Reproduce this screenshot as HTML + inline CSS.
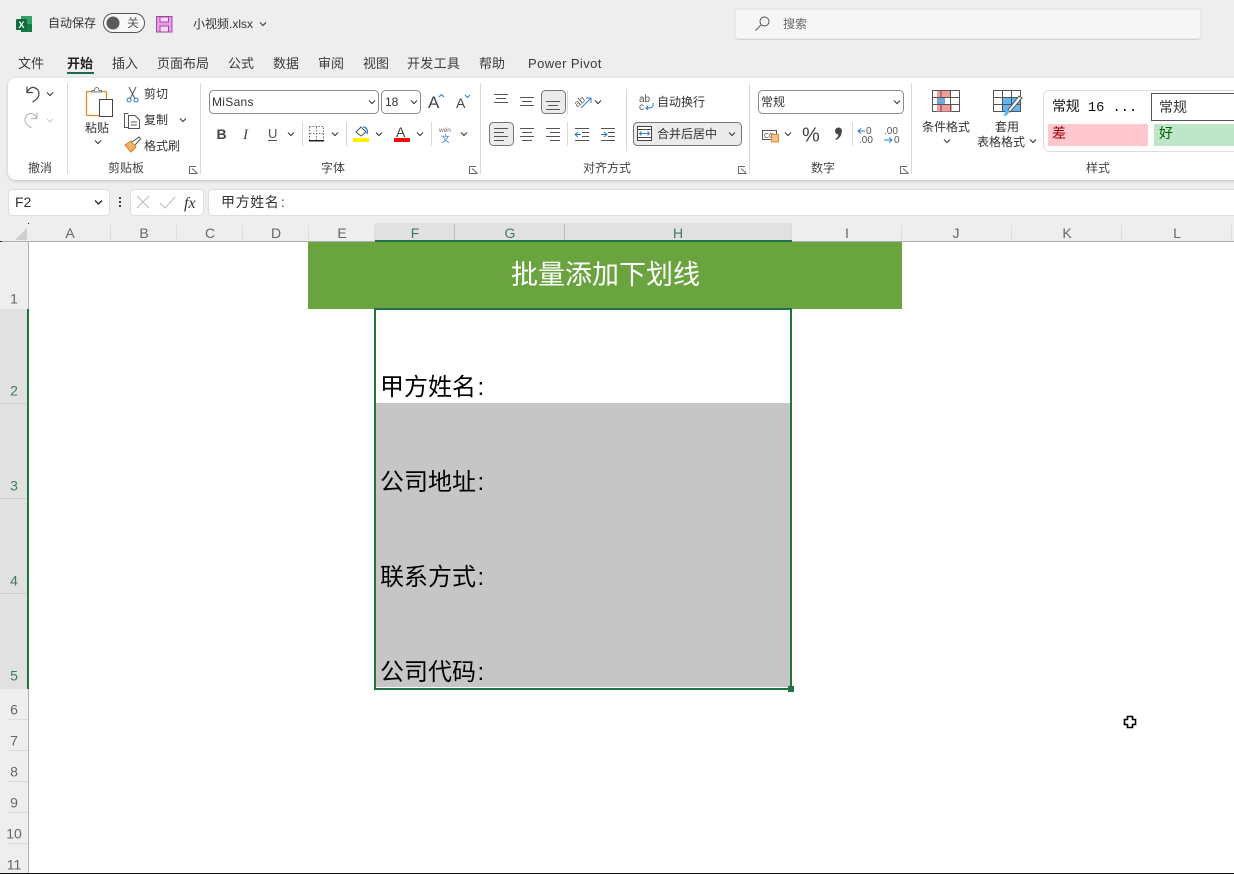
<!DOCTYPE html>
<html lang="zh">
<head>
<meta charset="utf-8">
<title>小视频.xlsx - Excel</title>
<style>
html,body{margin:0;padding:0;width:1234px;height:874px;overflow:hidden;background:#eeeeee}
svg{display:block;position:absolute;left:0;top:0}
text{font-family:"Liberation Sans","Noto Sans CJK SC",sans-serif;fill:#333}
.r{font-size:12px}
.tab{font-size:13px;fill:#3a3a3a}
.g{font-size:12px;fill:#444}
.h{font-size:14px;fill:#666;text-anchor:middle}
.hs{font-size:14px;fill:#3f7a5e;text-anchor:middle}
.c{font-size:24px;fill:#000}
.l{fill:none;stroke:#555;stroke-width:1}
.ch{fill:none;stroke:#444;stroke-width:1.2}
.sep{stroke:#d9d9d9;stroke-width:1}
</style>
</head>
<body>
<svg width="1234" height="874" viewBox="0 0 1234 874" xmlns="http://www.w3.org/2000/svg">
<defs>
<filter id="sh" x="-2%" y="-10%" width="104%" height="125%"><feDropShadow dx="0" dy="1" stdDeviation="1.500" flood-color="#000" flood-opacity=".2"/></filter>
<path id="cv" d="M-3 -1.500L0 1.500L3 -1.500" class="ch"/>
</defs>

<!-- title bar -->
<rect x="21" y="16" width="11" height="16" fill="#33a06a"/>
<rect x="21" y="24" width="11" height="8" fill="#107c41"/>
<rect x="16" y="19" width="11" height="11" rx="1" fill="#0f6b3c"/>
<text x="18.500" y="28" style="font-size:9px;font-weight:bold;fill:#fff">X</text>
<text x="48" y="27" class="r">自动保存</text>
<rect x="103.500" y="13.500" width="41" height="19" rx="9.500" fill="#f8f8f8" stroke="#555"/>
<circle cx="113" cy="23" r="6.500" fill="#5a5a5a"/>
<text x="127" y="27" class="r" style="fill:#555">关</text>
<path d="M156.500 16.500H172V32H156.500Z" fill="#e3a3e3" stroke="#a744a8"/>
<rect x="160" y="17" width="8.500" height="5" fill="#f3dcf3" stroke="#a744a8"/>
<rect x="160" y="26" width="8.500" height="6" fill="#f3dcf3" stroke="#a744a8"/>
<text x="193" y="28" style="font-size:12px">小视频.xlsx</text>
<use href="#cv" x="263" y="24"/>

<rect x="735" y="9" width="466" height="30" rx="4" fill="#f6f6f6" stroke="#dedede"/>
<rect x="737" y="39" width="462" height="1" fill="#d2d2d2"/>
<circle cx="764.500" cy="21.500" r="4.500" fill="none" stroke="#555"/>
<path d="M761 25L755.500 30.500" stroke="#555" fill="none"/>
<text x="783" y="28" class="r" style="fill:#666">搜索</text>

<!-- tabs -->
<text x="18" y="68" class="tab">文件</text>
<text x="67" y="68" class="tab" style="font-weight:bold;fill:#222">开始</text>
<rect x="67" y="72" width="27" height="2" fill="#1f6b4c"/>
<text x="112" y="68" class="tab">插入</text>
<text x="157" y="68" class="tab">页面布局</text>
<text x="228" y="68" class="tab">公式</text>
<text x="273" y="68" class="tab">数据</text>
<text x="318" y="68" class="tab">审阅</text>
<text x="363" y="68" class="tab">视图</text>
<text x="407" y="68" class="tab" style="letter-spacing:.3px">开发工具</text>
<text x="479" y="68" class="tab">帮助</text>
<text x="528" y="68" class="tab" style="letter-spacing:.4px">Power Pivot</text>

<!-- ribbon -->
<rect x="8" y="78" width="1240" height="102" rx="8" fill="#fff" filter="url(#sh)"/>
<g class="sep">
<line x1="67.500" y1="83" x2="67.500" y2="174"/><line x1="200.500" y1="83" x2="200.500" y2="174"/>
<line x1="480.500" y1="83" x2="480.500" y2="174"/><line x1="749.500" y1="83" x2="749.500" y2="174"/>
<line x1="911.500" y1="83" x2="911.500" y2="174"/>
<line x1="302.500" y1="122" x2="302.500" y2="146"/><line x1="346.500" y1="122" x2="346.500" y2="146"/><line x1="431.500" y1="122" x2="431.500" y2="146"/>
<line x1="567.500" y1="90" x2="567.500" y2="114"/><line x1="567.500" y1="122" x2="567.500" y2="146"/><line x1="626.500" y1="89" x2="626.500" y2="151"/>
<line x1="852.500" y1="122" x2="852.500" y2="146"/>
</g>
<text x="28" y="172" class="g">撤消</text>
<text x="108" y="172" class="g">剪贴板</text>
<text x="321" y="172" class="g">字体</text>
<text x="583" y="172" class="g">对齐方式</text>
<text x="811" y="172" class="g">数字</text>
<text x="1086" y="172" class="g">样式</text>
<g fill="none" stroke="#666" stroke-width="1">
<path d="M189.500 166.500V173.500H197.500M189.500 166.500H196M192 168.500L197 173"/>
<path d="M469.500 166.500V173.500H477.500M469.500 166.500H476M472 168.500L477 173"/>
<path d="M738.500 166.500V173.500H746.500M738.500 166.500H745M741 168.500L746 173"/>
<path d="M900.500 166.500V173.500H908.500M900.500 166.500H907M903 168.500L908 173"/>
</g>

<!-- undo / redo -->
<path d="M27 86.500V92.500H33M27 92.500C29 88 32 87 34 87.500C37.500 88.500 39 91 39 94C39 97.500 36 100 32.500 102" fill="none" stroke="#444" stroke-width="1.200"/>
<use href="#cv" x="50" y="94"/>
<path d="M37 112.500V118.500H31M37 118.500C35 114 32 113 30 113.500C26.500 114.500 25 117 25 120C25 123.500 28 126 31.500 128" fill="none" stroke="#bbb" stroke-width="1.200"/>
<path d="M47 119L50 122L53 119" fill="none" stroke="#ccc"/>

<!-- clipboard -->
<rect x="86.500" y="91.500" width="20" height="24" rx="1" fill="#fff" stroke="#e08a2e" stroke-width="1.300"/>
<path d="M92 92V90.500H94.500C94.500 86.500 99 86.500 99 90.500H101.500V92Z" fill="#fff" stroke="#777"/>
<rect x="99.500" y="99.500" width="13" height="17" fill="#fff" stroke="#444"/>
<text x="85" y="132" class="r">粘贴</text>
<use href="#cv" x="98" y="142"/>
<path d="M129 87L135 99M136 87L130 99" stroke="#555" fill="none"/>
<circle cx="129" cy="100" r="2" fill="none" stroke="#2b7cd3"/><circle cx="136" cy="100" r="2" fill="none" stroke="#2b7cd3"/>
<text x="144" y="98" class="r">剪切</text>
<path d="M128.500 113.500H124.500V127.500H128.500" class="l"/>
<path d="M128.500 115.500H135L139.500 120V128.500H128.500Z" class="l"/>
<path d="M131 122H137M131 125H137" class="l"/>
<text x="144" y="124" class="r">复制</text>
<use href="#cv" x="183" y="120"/>
<path d="M125 145L131 141L136 147L131 152Z" fill="#f0b070" stroke="#d97a1e"/>
<path d="M132 142L139 137L140.500 139L135 145" fill="#fff" stroke="#555"/>
<text x="144" y="150" class="r">格式刷</text>

<!-- font -->
<rect x="209.500" y="90.500" width="169" height="23" rx="4" fill="#fff" stroke="#8a8a8a"/>
<text x="212" y="106" class="r" style="letter-spacing:.3px">MiSans</text>
<use href="#cv" x="372" y="102"/>
<rect x="381.500" y="90.500" width="39" height="23" rx="4" fill="#fff" stroke="#8a8a8a"/>
<text x="385" y="106" class="r">18</text>
<use href="#cv" x="414" y="102"/>
<text x="428" y="108" style="font-size:17px;fill:#444">A</text>
<path d="M439 97L441.500 94.500L444 97" fill="none" stroke="#2b7cd3"/>
<text x="456" y="108" style="font-size:14px;fill:#444">A</text>
<path d="M465 95L467.500 97.500L470 95" fill="none" stroke="#2b7cd3"/>
<text x="216.500" y="139" style="font-size:14px;font-weight:bold;fill:#444">B</text>
<text x="243" y="139" style="font-size:15px;font-style:italic;font-family:'Liberation Serif',serif;fill:#444">I</text>
<text x="268" y="138" style="font-size:13px;fill:#555">U</text>
<rect x="268" y="140" width="9" height="1" fill="#555"/>
<use href="#cv" x="291" y="134"/>
<rect x="309.500" y="126.500" width="14" height="14" fill="none" stroke="#666" stroke-dasharray="1.500 1.500"/>
<path d="M316.500 127V140M310 133.500H323" stroke="#777" stroke-dasharray="1.500 1.500"/>
<rect x="309" y="140" width="15" height="1.500" fill="#222"/>
<use href="#cv" x="335" y="134"/>
<path d="M356 132L361 127L366 132L361 136Z" fill="#fff" stroke="#555"/>
<path d="M363 127C367 127 368 131 367 134" fill="none" stroke="#2b7cd3" stroke-width="1.300"/>
<rect x="353" y="138" width="16" height="4" fill="#ffee00"/>
<use href="#cv" x="379" y="134"/>
<text x="396" y="137" style="font-size:14px;fill:#444">A</text>
<rect x="394" y="138" width="16" height="4" fill="#e81010"/>
<use href="#cv" x="420" y="134"/>
<text x="439" y="132" style="font-size:6.500px;fill:#666">wén</text>
<text x="441" y="142" style="font-size:9px;fill:#2b7cd3">文</text>
<use href="#cv" x="464" y="134"/>

<!-- alignment -->
<path d="M494 94.500H508M496 98.500H506M494 102.500H508" class="l"/>
<path d="M520 97.500H534M522 101.500H532M520 105.500H534" class="l"/>
<rect x="541.500" y="90.500" width="24" height="23" rx="4" fill="#ebebeb" stroke="#777"/>
<path d="M546 101.500H560M548 105.500H558M546 109.500H560" class="l"/>
<text x="573" y="104" transform="rotate(-40 580 100)" style="font-size:10px;fill:#666">ab</text>
<path d="M581 108L591 98M586 98H591V103" fill="none" stroke="#2b7cd3"/>
<use href="#cv" x="598" y="102"/>
<rect x="489.500" y="122.500" width="24" height="23" rx="4" fill="#ebebeb" stroke="#777"/>
<path d="M494 128.500H508M494 132.500H504M494 136.500H508M494 140.500H504" class="l"/>
<path d="M520 128.500H534M522 132.500H532M520 136.500H534M522 140.500H532" class="l"/>
<path d="M546 128.500H560M550 132.500H560M546 136.500H560M550 140.500H560" class="l"/>
<path d="M575 128.500H589M582 132.500H589M582 136.500H589M575 140.500H589" class="l"/>
<path d="M581 134.500H575M578 132L575 134.500L578 137" fill="none" stroke="#2b7cd3"/>
<path d="M601 128.500H615M608 132.500H615M608 136.500H615M601 140.500H615" class="l"/>
<path d="M601 134.500H607M604 132L607 134.500L604 137" fill="none" stroke="#2b7cd3"/>
<text x="639" y="102" style="font-size:10px;fill:#555">ab</text>
<text x="639" y="110" style="font-size:10px;fill:#555">c</text>
<path d="M653 103C654 108 651 108 646 108M648 106L646 108L648 110" fill="none" stroke="#2b7cd3"/>
<text x="657" y="106" class="r">自动换行</text>
<rect x="633.500" y="122.500" width="108" height="23" rx="4" fill="#ebebeb" stroke="#777"/>
<rect x="637.500" y="126.500" width="14" height="14" fill="#fff" stroke="#444"/>
<path d="M638 129.500H651M638 137.500H651" stroke="#444" fill="none"/>
<path d="M639.500 133.500H649.500M641.500 131.500L639.500 133.500L641.500 135.500M647.500 131.500L649.500 133.500L647.500 135.500" fill="none" stroke="#2b7cd3"/>
<text x="657" y="138" class="r">合并后居中</text>
<use href="#cv" x="732" y="134"/>

<!-- number -->
<rect x="758.500" y="90.500" width="145" height="23" rx="4" fill="#fff" stroke="#8a8a8a"/>
<text x="761" y="106" class="r">常规</text>
<use href="#cv" x="897" y="102"/>
<rect x="762.500" y="130.500" width="14" height="9" fill="#fff" stroke="#555"/>
<text x="764" y="138" style="font-size:7px;fill:#555">CC</text>
<rect x="771.500" y="134.500" width="7" height="7.500" fill="#f6c38a" stroke="#e08a2e"/>
<use href="#cv" x="788" y="134"/>
<text x="802" y="141.500" style="font-size:20px;fill:#444">%</text>
<circle cx="838.500" cy="131" r="3.500" fill="#444"/>
<path d="M841.500 131C842 135 839.500 138.500 836 140L835.500 139C837.500 137.500 838.500 136 838.500 134Z" fill="#444"/>
<text x="866" y="134" style="font-size:10px;fill:#555">0</text>
<text x="859" y="143" style="font-size:10px;fill:#555">.00</text>
<path d="M858 131H865M861 128.500L858 131L861 133.500" fill="none" stroke="#2b7cd3"/>
<text x="884" y="134" style="font-size:10px;fill:#555">.00</text>
<text x="894" y="143" style="font-size:10px;fill:#555">0</text>
<path d="M884 140H892M889 137.500L892 140L889 142.500" fill="none" stroke="#2b7cd3"/>

<!-- styles -->
<rect x="932.500" y="90.500" width="27" height="21" fill="#fff" stroke="#555"/>
<rect x="937" y="91" width="13" height="6.500" fill="#f49b9b"/>
<rect x="937" y="97.500" width="8" height="7" fill="#6fa8dc"/>
<rect x="937" y="104.500" width="15" height="7" fill="#f49b9b"/>
<path d="M932.500 97.500H959.500M932.500 104.500H959.500M941 90.500V97M941 104.500V111.500M950.500 90.500V111.500" class="l"/>
<text x="922" y="131" class="r">条件格式</text>
<use href="#cv" x="947" y="141"/>
<rect x="993.500" y="90.500" width="27" height="21" fill="#fff" stroke="#555"/>
<rect x="1002" y="97" width="18" height="14" fill="#64b5f6"/>
<path d="M993.500 97.500H1020.500M993.500 104.500H1020.500M1002.500 90.500V111.500M1011.500 90.500V111.500" class="l"/>
<path d="M1022 98L1010 112L1008 110L1019 96Z" fill="#fff" stroke="#555"/>
<path d="M1003 116C1006 116 1009 115 1009 110.500L1006.500 110C1004 112 1005 115 1003 116Z" fill="#64b5f6"/>
<text x="995" y="131" class="r">套用</text>
<text x="977" y="146" class="r">表格格式</text>
<use href="#cv" x="1033" y="141"/>
<rect x="1043.500" y="90.500" width="210" height="61" rx="6" fill="#fff" stroke="#dcdcdc"/>
<text x="1052" y="111" style="font-size:14px;fill:#111;font-family:'Liberation Mono','Noto Sans CJK SC',monospace;letter-spacing:-.2px">常规 16 ...</text>
<rect x="1151.500" y="93.500" width="100" height="27" fill="#fff" stroke="#555"/>
<text x="1159" y="112" style="font-size:14px;fill:#333">常规</text>
<rect x="1048" y="124" width="100" height="22" fill="#ffc7ce"/>
<text x="1052" y="138" style="font-size:14px;fill:#9c0006">差</text>
<rect x="1154" y="124" width="90" height="22" fill="#bfe6c8"/>
<text x="1159" y="138" style="font-size:14px;fill:#006100">好</text>

<!-- formula bar -->
<rect x="8.500" y="189.500" width="101" height="26" rx="4" fill="#fff" stroke="#dedede"/>
<text x="15" y="207" style="font-size:14px;fill:#333">F2</text>
<path d="M95 200.500L98.500 204L102 200.500" fill="none" stroke="#333" stroke-width="1.500"/>
<rect x="119" y="197" width="2" height="2" fill="#444"/><rect x="119" y="201" width="2" height="2" fill="#444"/><rect x="119" y="205" width="2" height="2" fill="#444"/>
<rect x="130.500" y="189.500" width="73" height="26" rx="4" fill="#fff" stroke="#dedede"/>
<path d="M137 196L149 208M149 196L137 208" stroke="#bbb" fill="none"/>
<path d="M160 203L165 208L175 197" stroke="#bbb" fill="none"/>
<text x="184" y="208" style="font-size:16px;font-style:italic;font-family:'Liberation Serif',serif;fill:#333">fx</text>
<rect x="208.500" y="189.500" width="1040" height="26" rx="4" fill="#fff" stroke="#dedede"/>
<text x="221" y="207" style="font-size:14px;letter-spacing:.6px;fill:#333">甲方姓名<tspan dx="1.500">:</tspan></text>

<!-- grid -->
<rect x="0" y="216" width="1234" height="26" fill="#eeeeee"/>
<rect x="0" y="242" width="1234" height="632" fill="#fff"/>
<rect x="0" y="242" width="29" height="632" fill="#eeeeee"/>
<rect x="375" y="223" width="417" height="18" fill="#e1e1e1"/>
<rect x="0" y="309" width="28" height="380" fill="#e1e1e1"/>
<path d="M15 240H27V228Z" fill="#cfcfcf"/>
<rect x="0" y="241" width="1234" height="1" fill="#b0b0b0"/>
<rect x="28" y="242" width="1" height="632" fill="#b0b0b0"/>
<rect x="28" y="223" width="1" height="1" fill="#222"/>
<rect x="0" y="241" width="2" height="1" fill="#222"/>
<g stroke="#dcdcdc">
<path d="M110.500 225V241M176.500 225V241M242.500 225V241M308.500 225V241M374.500 225V241M901.500 225V241M1011.500 225V241M1121.500 225V241M1231.500 225V241M791.500 225V241"/>
<path d="M8 719.500H28M8 750.500H28M8 781.500H28M8 812.500H28M8 843.500H28"/>
</g>
<path d="M454.500 224V241M564.500 224V241" stroke="#bdbdbd"/>
<path d="M0 403.500H28M0 498.500H28M0 593.500H28" stroke="#cfcfcf"/>
<text x="70" y="238" class="h">A</text><text x="144" y="238" class="h">B</text><text x="210" y="238" class="h">C</text>
<text x="276" y="238" class="h">D</text><text x="342" y="238" class="h">E</text>
<text x="415" y="238" class="hs">F</text><text x="510" y="238" class="hs">G</text><text x="678" y="238" class="hs">H</text>
<text x="847" y="238" class="h">I</text><text x="956" y="238" class="h">J</text><text x="1067" y="238" class="h">K</text><text x="1177" y="238" class="h">L</text>
<rect x="375" y="240" width="417" height="2" fill="#217346"/>
<rect x="27" y="309" width="2" height="380" fill="#217346"/>
<text x="14" y="303.500" class="h">1</text>
<text x="14" y="395.500" class="hs">2</text><text x="14" y="490.500" class="hs">3</text><text x="14" y="585.500" class="hs">4</text><text x="14" y="680.500" class="hs">5</text>
<text x="14" y="714.500" class="h">6</text><text x="14" y="745.500" class="h">7</text><text x="14" y="776.500" class="h">8</text><text x="14" y="807.500" class="h">9</text><text x="14" y="838.500" class="h">10</text><text x="14" y="869.500" class="h">11</text>

<!-- cells -->
<rect x="308" y="242" width="594" height="67" fill="#6aa43f"/>
<text x="605.500" y="284" style="font-size:27px;fill:#fff;text-anchor:middle">批量添加下划线</text>
<rect x="376" y="403" width="414" height="284" fill="#c6c6c6"/>
<rect x="375" y="309" width="416" height="380" fill="none" stroke="#217346" stroke-width="2"/>
<rect x="788" y="686" width="6" height="6" fill="#217346"/>
<text x="380" y="395" class="c">甲方姓名<tspan dx="1.500">:</tspan></text>
<text x="380" y="490" class="c">公司地址<tspan dx="1.500">:</tspan></text>
<text x="380" y="585" class="c">联系方式<tspan dx="1.500">:</tspan></text>
<text x="380" y="680" class="c">公司代码<tspan dx="1.500">:</tspan></text>

<!-- cursor -->
<path d="M1127.500 716.500H1132.500V719.500H1135.500V724.500H1132.500V727.500H1127.500V724.500H1124.500V719.500H1127.500Z" fill="#fff" stroke="#000" stroke-width="1.600"/>

<rect x="0" y="873" width="1234" height="1" fill="#111"/>
</svg>
</body>
</html>
